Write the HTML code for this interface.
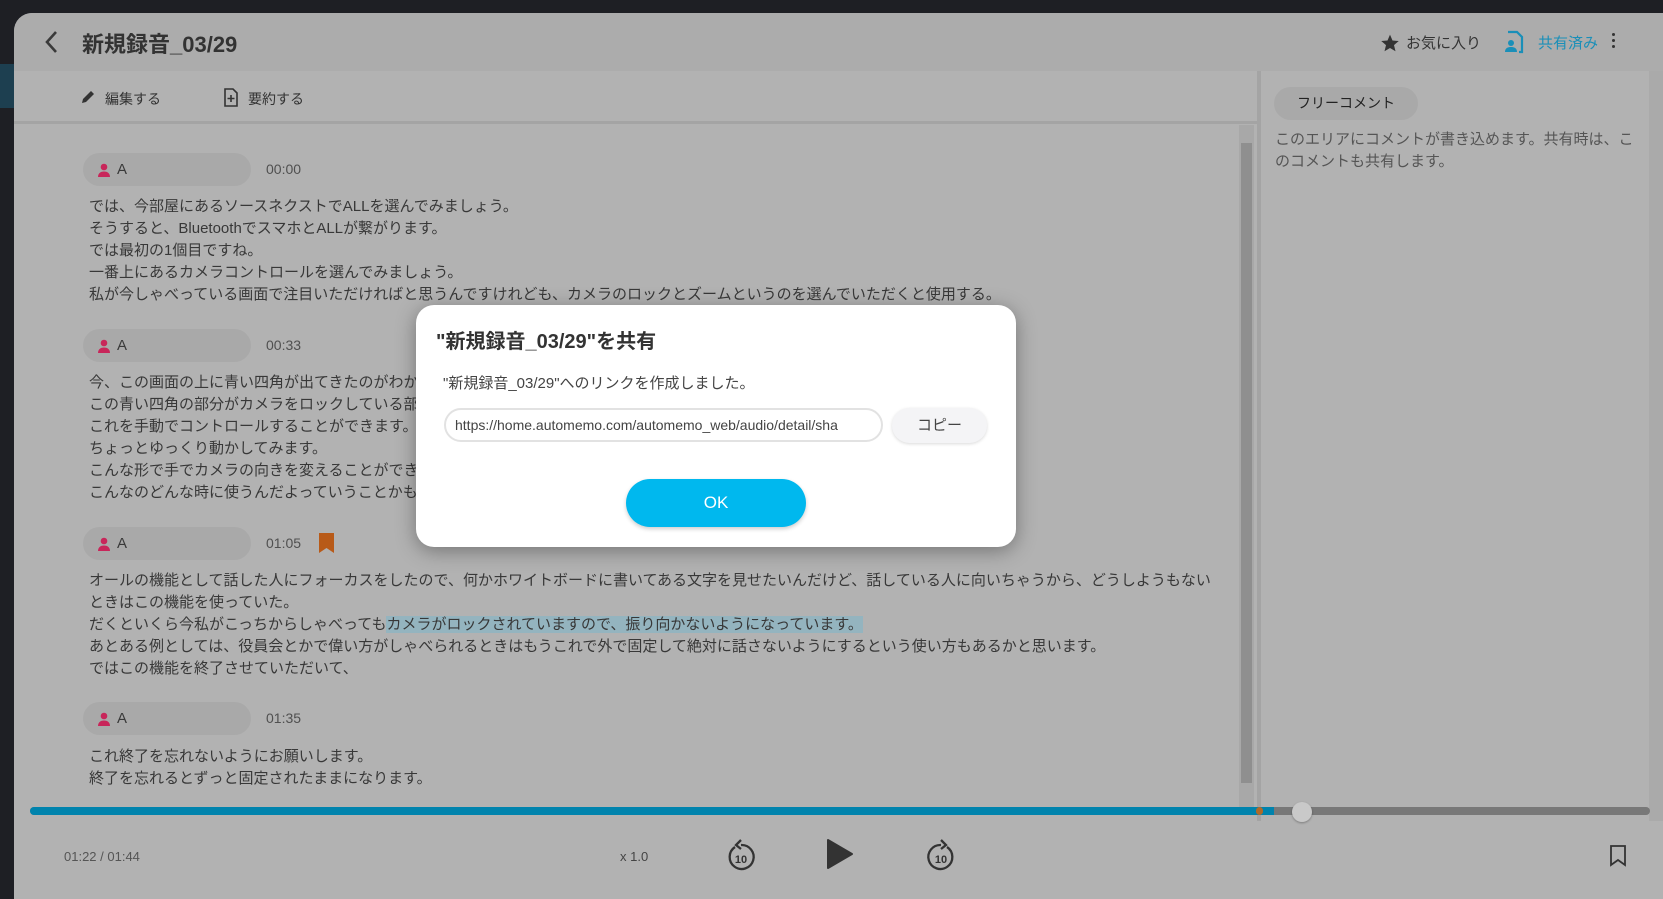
<!DOCTYPE html>
<html><head><meta charset="utf-8"><style>
*{margin:0;padding:0;box-sizing:border-box}
body{width:1663px;height:899px;overflow:hidden;background:#1e1f24;font-family:"Liberation Sans","Noto Sans CJK JP",sans-serif;color:#3a3a3a;position:relative}
.abs{position:absolute}
#panel{position:absolute;left:14px;top:13px;width:1649px;height:886px;background:#b2b2b2;border-radius:18px 0 0 0;overflow:hidden}
.t{position:absolute;white-space:nowrap;font-size:15px;line-height:22px;color:#383838}
.pill{position:absolute;left:69px;width:168px;height:33px;border-radius:17px;background:#a9a9a9}
.pill span{position:absolute;left:34px;top:8px;font-size:15px;color:#3a3a3a}
.time{position:absolute;left:252px;font-size:14px;color:#505050}
</style></head><body>
<div class="abs" style="left:0;top:64px;width:14px;height:44px;background:#1d3f50"></div>
<div id="panel">
 <div class="abs" style="left:0;top:0;width:1649px;height:58px;background:#acacac"></div>
 <svg class="abs" style="left:28px;top:16px" width="20" height="26"><path d="M14 3 L5 13 L14 23" stroke="#3a3a3a" stroke-width="2.6" fill="none"/></svg>
 <div class="abs" style="left:68px;top:14px;font-size:22px;font-weight:bold;color:#333">新規録音_03/29</div>
 <svg class="abs" style="left:1366px;top:20px" width="20" height="20" viewBox="0 0 24 24"><path d="M12 2l3 7 7.5.6-5.7 4.9 1.8 7.4L12 18l-6.6 3.9 1.8-7.4L1.5 9.6 9 9z" fill="#333"/></svg>
 <div class="abs" style="left:1392px;top:19px;font-size:15px;color:#333">お気に入り</div>
 <svg class="abs" style="left:1489px;top:17px" width="22" height="24" viewBox="0 0 22 24"><path d="M5 2h9l5 5v15h-3" stroke="#1a8fb8" stroke-width="2.2" fill="none"/><circle cx="8" cy="13" r="3" fill="#1a8fb8"/><path d="M2 22c0-4 3-5 6-5s6 1 6 5z" fill="#1a8fb8"/></svg>
 <div class="abs" style="left:1524px;top:19px;font-size:15px;color:#1a8fb8">共有済み</div>
 <div class="abs" style="left:1598px;top:20px;width:3px;height:3px;background:#333;border-radius:2px;box-shadow:0 6px 0 #333,0 12px 0 #333"></div>
 <div class="abs" style="left:0;top:58px;width:1243px;height:53px;background:#b2b2b2;border-bottom:3px solid #a4a4a4"></div>
 <svg class="abs" style="left:66px;top:76px" width="16" height="16" viewBox="0 0 16 16"><path d="M2 14l1-4 8-8 3 3-8 8z" fill="#333"/></svg>
 <div class="abs" style="left:91px;top:76px;font-size:14px;color:#333">編集する</div>
 <svg class="abs" style="left:209px;top:75px" width="16" height="19" viewBox="0 0 16 19"><path d="M2 1h8l4 4v13H2z" stroke="#333" stroke-width="1.6" fill="none"/><path d="M8 7v7M4.5 10.5h7" stroke="#333" stroke-width="1.6"/></svg>
 <div class="abs" style="left:234px;top:76px;font-size:14px;color:#333">要約する</div>
 <div class="abs" style="left:1225px;top:112px;width:15px;height:690px;background:#a8a8a8"></div>
 <div class="abs" style="left:1227px;top:130px;width:11px;height:640px;background:#8f8f8f"></div>
 <div class="abs" style="left:1243px;top:58px;width:4px;height:750px;background:#a4a4a4"></div>
 <div class="abs" style="left:1260px;top:74px;width:144px;height:33px;border-radius:17px;background:#a9a9a9;font-size:14px;color:#222;text-align:center;line-height:33px">フリーコメント</div>
 <div class="abs" style="left:1261px;top:116px;font-size:15px;line-height:22px;color:#555;width:360px">このエリアにコメントが書き込めます。共有時は、このコメントも共有します。</div>
 <div class="abs" style="left:1635px;top:58px;width:14px;height:750px;background:#aaa"></div>
 <div class="pill" style="top:140px"><svg class="abs" style="left:14px;top:10px" width="14" height="14" viewBox="0 0 14 14"><circle cx="7" cy="4" r="3.3" fill="#c8265a"/><path d="M1 14c0-4 3-5.5 6-5.5s6 1.5 6 5.5z" fill="#c8265a"/></svg><span>A</span></div>
 <div class="time" style="top:148px">00:00</div>
 <div class="t" style="left:75px;top:183px">では、今部屋にあるソースネクストでALLを選んでみましょう。<br>そうすると、BluetoothでスマホとALLが繋がります。<br>では最初の1個目ですね。<br>一番上にあるカメラコントロールを選んでみましょう。<br>私が今しゃべっている画面で注目いただければと思うんですけれども、カメラのロックとズームというのを選んでいただくと使用する。</div>
 <div class="pill" style="top:316px"><svg class="abs" style="left:14px;top:10px" width="14" height="14" viewBox="0 0 14 14"><circle cx="7" cy="4" r="3.3" fill="#c8265a"/><path d="M1 14c0-4 3-5.5 6-5.5s6 1.5 6 5.5z" fill="#c8265a"/></svg><span>A</span></div>
 <div class="time" style="top:324px">00:33</div>
 <div class="t" style="left:75px;top:359px">今、この画面の上に青い四角が出てきたのがわかりますでしょうか。<br>この青い四角の部分がカメラをロックしている部分で、これを動かすとカメラの向きが変わるというような状態です。<br>これを手動でコントロールすることができます。<br>ちょっとゆっくり動かしてみます。<br>こんな形で手でカメラの向きを変えることができます。<br>こんなのどんな時に使うんだよっていうことかもしれませんが、どうしてもここを映したいという場合ですね。</div>
 <div class="pill" style="top:514px"><svg class="abs" style="left:14px;top:10px" width="14" height="14" viewBox="0 0 14 14"><circle cx="7" cy="4" r="3.3" fill="#c8265a"/><path d="M1 14c0-4 3-5.5 6-5.5s6 1.5 6 5.5z" fill="#c8265a"/></svg><span>A</span></div>
 <div class="time" style="top:522px">01:05</div>
 <svg class="abs" style="left:305px;top:520px" width="15" height="20"><path d="M0 0h15v20l-7.5-5L0 20z" fill="#b85a18"/></svg>
 <div class="t" style="left:75px;top:557px">オールの機能として話した人にフォーカスをしたので、何かホワイトボードに書いてある文字を見せたいんだけど、話している人に向いちゃうから、どうしようもない<br>ときはこの機能を使っていた。<br>だくといくら今私がこっちからしゃべっても<span style="background:#94b4bf">カメラがロックされていますので、振り向かないようになっています。</span><br>あとある例としては、役員会とかで偉い方がしゃべられるときはもうこれで外で固定して絶対に話さないようにするという使い方もあるかと思います。<br>ではこの機能を終了させていただいて、</div>
 <div class="pill" style="top:689px"><svg class="abs" style="left:14px;top:10px" width="14" height="14" viewBox="0 0 14 14"><circle cx="7" cy="4" r="3.3" fill="#c8265a"/><path d="M1 14c0-4 3-5.5 6-5.5s6 1.5 6 5.5z" fill="#c8265a"/></svg><span>A</span></div>
 <div class="time" style="top:697px">01:35</div>
 <div class="t" style="left:75px;top:733px">これ終了を忘れないようにお願いします。<br>終了を忘れるとずっと固定されたままになります。</div>
 <div class="abs" style="left:16px;top:794px;width:1620px;height:8px;border-radius:4px;background:#787878"></div>
 <div class="abs" style="left:16px;top:794px;width:1244px;height:8px;border-radius:4px 0 0 4px;background:#0083ad"></div>
 <div class="abs" style="left:1242px;top:794px;width:7px;height:8px;border-radius:4px;background:#b06a2a"></div>
 <div class="abs" style="left:1278px;top:789px;width:20px;height:20px;border-radius:50%;background:#c9c9c9;box-shadow:0 1px 2px rgba(0,0,0,.3)"></div>
 <div class="abs" style="left:50px;top:836px;font-size:13px;color:#555">01:22 / 01:44</div>
 <div class="abs" style="left:606px;top:836px;font-size:13px;color:#444">x 1.0</div>
 <svg class="abs" style="left:711px;top:825px" width="32" height="34" viewBox="0 0 32 34"><path d="M10 9A12 12 0 1 0 16 7" stroke="#333" stroke-width="2.3" fill="none"/><path d="M16 2l-5 5 5 4" stroke="#333" stroke-width="2.3" fill="none"/><text x="16" y="25" font-size="11" font-weight="bold" text-anchor="middle" fill="#333" font-family="Liberation Sans">10</text></svg>
 <svg class="abs" style="left:812px;top:825px" width="28" height="32"><path d="M2 2 L26 16 L2 30 Z" fill="#333" stroke="#333" stroke-width="2" stroke-linejoin="round"/></svg>
 <svg class="abs" style="left:911px;top:825px" width="32" height="34" viewBox="0 0 32 34"><path d="M22 9A12 12 0 1 1 16 7" stroke="#333" stroke-width="2.3" fill="none"/><path d="M16 2l5 5-5 4" stroke="#333" stroke-width="2.3" fill="none"/><text x="16" y="25" font-size="11" font-weight="bold" text-anchor="middle" fill="#333" font-family="Liberation Sans">10</text></svg>
 <svg class="abs" style="left:1595px;top:832px" width="18" height="22"><path d="M2 1h14v19l-7-5-7 5z" stroke="#333" stroke-width="1.8" fill="none"/></svg>
</div>
<div class="abs" style="left:416px;top:305px;width:600px;height:242px;background:#fff;border-radius:18px;box-shadow:0 4px 20px rgba(0,0,0,.35)">
 <div class="abs" style="left:20px;top:20px;font-size:20px;font-weight:bold;color:#333">"新規録音_03/29"を共有</div>
 <div class="abs" style="left:27px;top:67px;font-size:15px;color:#444">"新規録音_03/29"へのリンクを作成しました。</div>
 <div class="abs" style="left:28px;top:103px;width:439px;height:34px;border:2px solid #e2e2e2;border-radius:17px;font-size:14px;color:#444;line-height:30px;padding-left:9px;overflow:hidden;white-space:nowrap">https://home.automemo.com/automemo_web/audio/detail/sha</div>
 <div class="abs" style="left:476px;top:103px;width:95px;height:35px;border-radius:18px;background:#f4f4f6;box-shadow:0 1px 3px rgba(0,0,0,.15);font-size:15px;color:#444;text-align:center;line-height:35px">コピー</div>
 <div class="abs" style="left:210px;top:174px;width:180px;height:48px;border-radius:24px;background:#00b8ee;box-shadow:0 2px 4px rgba(0,0,0,.2);color:#fff;font-size:17px;text-align:center;line-height:48px">OK</div>
</div>
</body></html>
